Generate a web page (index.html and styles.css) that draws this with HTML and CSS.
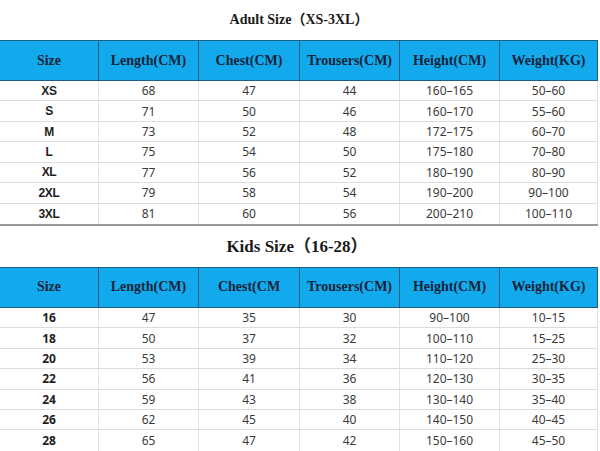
FILE: index.html
```html
<!DOCTYPE html>
<html>
<head>
<meta charset="utf-8">
<link rel="stylesheet" href="styles.css">
</head>
<body>
<section class="chart">
  <h2 class="title title-adult">Adult Size（XS-3XL）</h2>
  <div class="grid">
    <div class="hd">Size</div><div class="hd">Length(CM)</div><div class="hd">Chest(CM)</div><div class="hd">Trousers(CM)</div><div class="hd">Height(CM)</div><div class="hd">Weight(KG)</div>
    <div class="c sz">XS</div><div class="c">68</div><div class="c">47</div><div class="c">44</div><div class="c">160–165</div><div class="c">50–60</div>
    <div class="c sz">S</div><div class="c">71</div><div class="c">50</div><div class="c">46</div><div class="c">160–170</div><div class="c">55–60</div>
    <div class="c sz">M</div><div class="c">73</div><div class="c">52</div><div class="c">48</div><div class="c">172–175</div><div class="c">60–70</div>
    <div class="c sz">L</div><div class="c">75</div><div class="c">54</div><div class="c">50</div><div class="c">175–180</div><div class="c">70–80</div>
    <div class="c sz">XL</div><div class="c">77</div><div class="c">56</div><div class="c">52</div><div class="c">180–190</div><div class="c">80–90</div>
    <div class="c sz">2XL</div><div class="c">79</div><div class="c">58</div><div class="c">54</div><div class="c">190–200</div><div class="c">90–100</div>
    <div class="c sz">3XL</div><div class="c">81</div><div class="c">60</div><div class="c">56</div><div class="c">200–210</div><div class="c">100–110</div>
  </div>
</section>
<section class="chart">
  <h2 class="title title-kids">Kids Size（16-28）</h2>
  <div class="grid">
    <div class="hd">Size</div><div class="hd">Length(CM)</div><div class="hd">Chest(CM</div><div class="hd">Trousers(CM)</div><div class="hd">Height(CM)</div><div class="hd">Weight(KG)</div>
    <div class="c sz kid">16</div><div class="c">47</div><div class="c">35</div><div class="c">30</div><div class="c">90–100</div><div class="c">10–15</div>
    <div class="c sz kid">18</div><div class="c">50</div><div class="c">37</div><div class="c">32</div><div class="c">100–110</div><div class="c">15–25</div>
    <div class="c sz kid">20</div><div class="c">53</div><div class="c">39</div><div class="c">34</div><div class="c">110–120</div><div class="c">25–30</div>
    <div class="c sz kid">22</div><div class="c">56</div><div class="c">41</div><div class="c">36</div><div class="c">120–130</div><div class="c">30–35</div>
    <div class="c sz kid">24</div><div class="c">59</div><div class="c">43</div><div class="c">38</div><div class="c">130–140</div><div class="c">35–40</div>
    <div class="c sz kid">26</div><div class="c">62</div><div class="c">45</div><div class="c">40</div><div class="c">140–150</div><div class="c">40–45</div>
    <div class="c sz kid">28</div><div class="c">65</div><div class="c">47</div><div class="c">42</div><div class="c">150–160</div><div class="c">45–50</div>
  </div>
</section>
</body>
</html>
```
FILE: styles.css
```css
html, body {
  margin: 0;
  padding: 0;
  background: #ffffff;
}
body {
  width: 600px;
  height: 451px;
  overflow: hidden;
}
.chart {
  width: 598px;
}
.title {
  margin: 0;
  height: 40px;
  line-height: 40px;
  text-align: center;
  font-family: "Liberation Serif", "Noto Sans CJK SC", serif;
  font-weight: bold;
  color: #1a1a1a;
}
.title-adult {
  font-size: 14px;
}
.title-kids {
  font-size: 17px;
  height: 41px;
  line-height: 41px;
  text-indent: -4px;
}
.grid {
  display: grid;
  grid-template-columns: 99px 100px 101px 100px 100px 98px;
  grid-template-rows: 41px;
  grid-auto-rows: 20.43px;
  border-bottom: 2px solid #9a9a9a;
}
.hd {
  box-sizing: border-box;
  background: #12aaec;
  border-top: 1px solid #1d5f84;
  border-bottom: 1px solid #1d5f84;
  border-right: 1px solid #1d5f84;
  display: flex;
  align-items: center;
  justify-content: center;
  font-family: "Liberation Serif", serif;
  font-weight: bold;
  font-size: 14px;
  color: #17243a;
  white-space: nowrap;
}
.c {
  box-sizing: border-box;
  border-right: 1px solid #e2e2e2;
  border-bottom: 1px solid #dcdcdc;
  display: flex;
  align-items: center;
  justify-content: center;
  font-family: "Noto Sans", sans-serif;
  font-size: 12px;
  color: #3a3a3a;
}
.c:nth-last-child(-n+6) {
  border-bottom: none;
}
.sz {
  font-family: "Liberation Sans", Arial, sans-serif;
  font-weight: bold;
  color: #1e1e1e;
  letter-spacing: -0.3px;
}
.sz.kid {
  font-family: "Noto Sans", sans-serif;
  letter-spacing: 0;
}
```
